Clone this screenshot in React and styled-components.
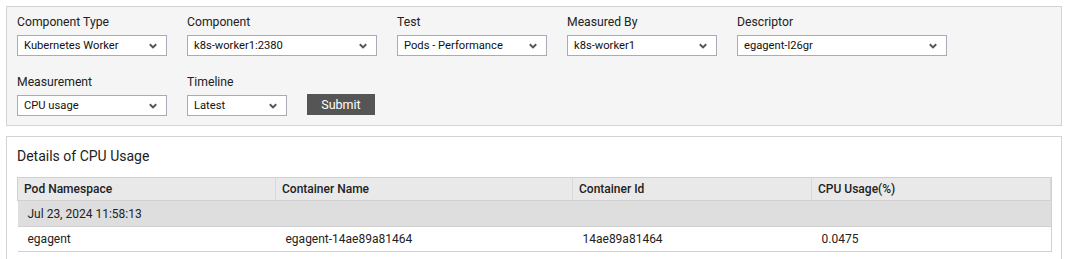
import styled, { createGlobalStyle } from "styled-components";

const Global = createGlobalStyle`
  body {
    margin: 0;
    background: #fff;
    font-family: Roboto, "Liberation Sans", sans-serif;
    color: #222;
  }
`;

const Page = styled.div`
  padding: 6px 5px 0 6px;
  display: flex;
  flex-direction: column;
  gap: 10px;
`;

const FilterPanel = styled.section`
  background: #f5f5f5;
  border: 1px solid #d3d3d3;
  padding: 7px 10px 9px;
  display: flex;
  flex-direction: column;
  gap: 18px;
`;

const FieldRow = styled.div`
  display: flex;
  align-items: flex-end;
  gap: 20px;
`;

const Field = styled.div`
  display: flex;
  flex-direction: column;
  gap: 5px;
  width: ${({ $w }) => $w}px;
`;

const Label = styled.label`
  font-size: 12.2px;
  line-height: 16px;
  color: #222;
`;

const SelectBox = styled.div`
  height: 21px;
  box-sizing: border-box;
  border: 1px solid #a9acb6;
  background: #fff;
  display: flex;
  align-items: center;
  justify-content: space-between;
  padding: 0 9px 0 6px;
  font-size: 11.2px;
  color: #111;
`;

const Chevron = () => (
  <svg width="8" height="6" viewBox="0 0 8 6">
    <path d="M0.8 1.2 L4 4.4 L7.2 1.2" fill="none" stroke="#555" strokeWidth="2" />
  </svg>
);

const Select = ({ value }) => (
  <SelectBox>
    <span>{value}</span>
    <Chevron />
  </SelectBox>
);

const SubmitButton = styled.button`
  width: 68px;
  height: 21px;
  margin-bottom: 1px;
  border: none;
  background: #555;
  color: #fff;
  font-family: Roboto, "Liberation Sans", sans-serif;
  font-size: 12.5px;
  padding: 0;
  cursor: pointer;
`;

const DetailsPanel = styled.section`
  background: #fff;
  border: 1px solid #d3d3d3;
  border-bottom: none;
  padding: 10px 9px 0 10px;
  height: 112px;
`;

const Title = styled.h3`
  margin: 0 0 12px;
  font-size: 14px;
  line-height: 18px;
  font-weight: 400;
  color: #222;
`;

const TableWrap = styled.div`
  border-right: 1px solid #d0d0d0;
`;

const Table = styled.table`
  width: 100%;
  border-collapse: collapse;
  table-layout: fixed;
  font-size: 12px;
`;

const Th = styled.th`
  height: 23px;
  box-sizing: border-box;
  text-align: left;
  font-weight: 500;
  padding: 0 6px;
  background: #e9e9e9;
  border: 1px solid #d0d0d0;
  border-right-color: #d8d8d8;
  width: ${({ $w }) => ($w ? `${$w}px` : "auto")};
`;

const GroupCell = styled.td`
  height: 25px;
  background: #dedede;
  padding: 0 10px;
  font-size: 12px;
  border-bottom: 1px solid #d0d0d0;
`;

const Td = styled.td`
  height: 24px;
  padding: 0 10px;
  border-bottom: 1px solid #d0d0d0;
  color: #222;
`;

const columns = [
  { name: "Pod Namespace", w: 258 },
  { name: "Container Name", w: 297 },
  { name: "Container Id", w: 239 },
  { name: "CPU Usage(%)" },
];

const rows = [["egagent", "egagent-14ae89a81464", "14ae89a81464", "0.0475"]];

export default function App() {
  return (
    <>
      <Global />
      <Page>
        <FilterPanel>
          <FieldRow>
            <Field $w={150}>
              <Label>Component Type</Label>
              <Select value="Kubernetes Worker" />
            </Field>
            <Field $w={190}>
              <Label>Component</Label>
              <Select value="k8s-worker1:2380" />
            </Field>
            <Field $w={150}>
              <Label>Test</Label>
              <Select value="Pods - Performance" />
            </Field>
            <Field $w={150}>
              <Label>Measured By</Label>
              <Select value="k8s-worker1" />
            </Field>
            <Field $w={210}>
              <Label>Descriptor</Label>
              <Select value="egagent-l26gr" />
            </Field>
          </FieldRow>
          <FieldRow>
            <Field $w={150}>
              <Label>Measurement</Label>
              <Select value="CPU usage" />
            </Field>
            <Field $w={100}>
              <Label>Timeline</Label>
              <Select value="Latest" />
            </Field>
            <SubmitButton>Submit</SubmitButton>
          </FieldRow>
        </FilterPanel>
        <DetailsPanel>
          <Title>Details of CPU Usage</Title>
          <TableWrap>
            <Table>
              <thead>
                <tr>
                  {columns.map((c) => (
                    <Th key={c.name} $w={c.w}>{c.name}</Th>
                  ))}
                </tr>
              </thead>
              <tbody>
                <tr>
                  <GroupCell colSpan={4}>Jul 23, 2024 11:58:13</GroupCell>
                </tr>
                {rows.map((r) => (
                  <tr key={r[1]}>
                    {r.map((v, i) => (
                      <Td key={i}>{v}</Td>
                    ))}
                  </tr>
                ))}
              </tbody>
            </Table>
          </TableWrap>
        </DetailsPanel>
      </Page>
    </>
  );
}
